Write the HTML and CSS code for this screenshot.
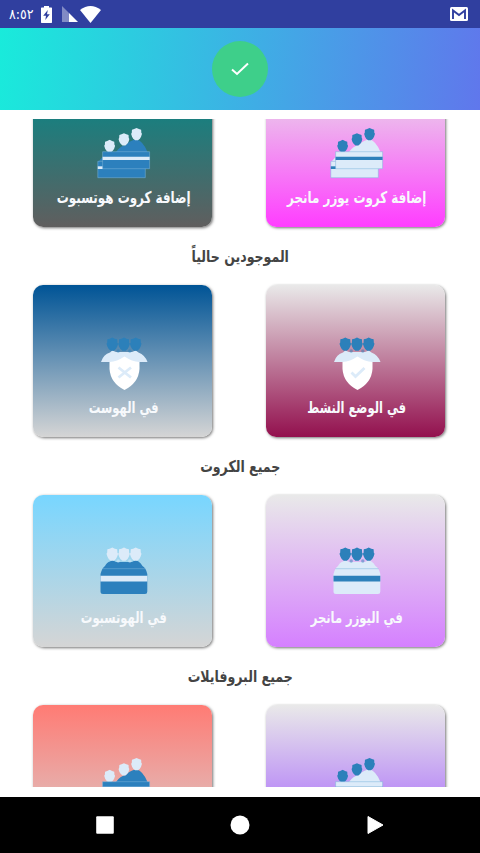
FILE: index.html
```html
<!DOCTYPE html>
<html lang="ar">
<head>
<meta charset="utf-8">
<title>الكروت</title>
<link rel="stylesheet" href="styles.css">
</head>
<body>
<svg class="defs" width="0" height="0" aria-hidden="true">
  <symbol id="head" viewBox="0 0 12 14"><path d="M6 .3L8.500 1.500L10.800 2.200L11 5.500L11.700 6.500L10.700 9.500L9.500 11.500L7.500 13.200H4.500L2.500 11.500L1.300 9.500L.3 6.500L1 5.500L1.200 2.200L3.500 1.500Z"/></symbol>
  <symbol id="stack" viewBox="0 0 64 56">
    <path class="a" d="M25 27Q29 21 35 20Q39 15 45.600 14.500Q52 16 56.500 27Z"/>
    <path class="a" d="M7.800 36.300L11.600 32V36.300Z"/>
    <g class="b"><use href="#head" x="12.900" y="14.500" width="11.500" height="13.500"/><use href="#head" x="27.200" y="7.800" width="11.500" height="13.500"/><use href="#head" x="39.800" y="2.600" width="11.500" height="13.500"/></g>
    <path class="a edge" d="M6.800 36.300H54.300V52.700H6.800Z"/>
    <path class="b" d="M6.800 41.300H12V44H6.800Z"/>
    <path class="a edge" d="M11.600 26.700H58.600V43.700H11.600Z"/>
    <path class="b" d="M11.600 31.700H58.600V35H11.600Z"/>
  </symbol>
  <symbol id="trio" viewBox="0 0 64 56">
    <use href="#head" x="15.100" y="2.100" width="12.400" height="14.400"/><use href="#head" x="26.800" y="2.100" width="12.400" height="14.400"/><use href="#head" x="38.500" y="2.100" width="12.400" height="14.400"/>
  </symbol>
  <symbol id="group" viewBox="0 0 64 56">
    <path class="a" d="M9.500 29Q11 23 14 21Q16 17 19 16.500L21.300 15L25 17H41L44.700 15L47.500 16.500Q50 18 51.500 21Q55 23 56.300 29V46.500Q56.300 49 54 49H12Q9.500 49 9.500 46.500Z"/>
    <path class="edge" d="M11.500 23.700H54.500"/>
    <path class="b" d="M9.500 30.700H56.300V36.500H9.500Z"/>
    <use class="b" href="#trio" width="64" height="56"/>
    <g class="b tint"><circle cx="27.200" cy="16" r="1.700"/><circle cx="38.800" cy="16" r="1.700"/></g>
  </symbol>
  <symbol id="shield" viewBox="0 0 64 56">
    <path class="a" d="M10 27Q12.500 19 19 17.500L21.300 15.500L25 17H41L44.700 15.500L47.500 17.500Q54 20 56.500 27Z"/>
    <use class="b" href="#trio" width="64" height="56"/>
    <g class="b tint"><circle cx="27.200" cy="16" r="1.700"/><circle cx="38.800" cy="16" r="1.700"/></g>
    <path class="plate" d="M33.500 21.500Q41 26.500 48.500 27V34Q47.500 48 33.500 55Q19.500 48 18.500 34V27Q26 26.500 33.500 21.500Z"/>
  </symbol>
</svg>

<header class="status">
  <div class="status-side">
    <span class="clock">٨:٥٢</span>
    <svg class="battery" viewBox="0 0 11 17"><path fill="#fff" d="M3 0H8V1.500H10.500L11 2V16.500L10.500 17H.5L0 16.500V2L.5 1.500H3Z"/><path fill="#303f9f" d="M6.800 4L2.200 9.800H5L4.300 14L8.800 8.200H6Z"/></svg>
    <svg class="signal" viewBox="0 0 16 16"><path fill="#fff" opacity=".4" d="M0 0L7 7V16H0Z"/><path fill="#fff" d="M7 7L16 16H7Z"/></svg>
    <svg class="wifi" viewBox="0 0 21 17"><path fill="#fff" d="M0 4Q10.500-4 21 4L10.500 17Z"/></svg>
  </div>
  <svg class="mail" viewBox="0 0 18 14"><rect width="18" height="14" rx="1.500" fill="#fff"/><path d="M3 12V3.500L9 8L15 3.500V12" fill="none" stroke="#303f9f" stroke-width="1.900"/></svg>
</header>

<div class="appbar"><div class="badge"><svg viewBox="0 0 18 14"><path d="M1 7.500L6 12L17 1.500" fill="none" stroke="#fff" stroke-width="2"/></svg></div></div>

<main class="scroller">
  <div class="content">
    <div class="row">
      <article class="card teal on-dark"><svg class="icon"><use href="#stack"/></svg><p class="label long">إضافة كروت هوتسبوت</p></article>
      <article class="card magenta"><svg class="icon"><use href="#stack"/></svg><p class="label long">إضافة كروت يوزر مانجر</p></article>
    </div>
    <h2>الموجودين حالياً</h2>
    <div class="row">
      <article class="card navy"><svg class="icon"><use href="#shield"/><path class="mark" d="M27.500 32.500L40 42.500M40 32.500L27.500 42.500"/></svg><p class="label">في الهوست</p></article>
      <article class="card crimson"><svg class="icon"><use href="#shield"/><path class="mark" d="M27.500 37.500L31.500 41.500L40.500 33"/></svg><p class="label">في الوضع النشط</p></article>
    </div>
    <h2>جميع الكروت</h2>
    <div class="row">
      <article class="card sky on-dark"><svg class="icon"><use href="#group"/></svg><p class="label">في الهوتسبوت</p></article>
      <article class="card violet"><svg class="icon"><use href="#group"/></svg><p class="label">في اليوزر مانجر</p></article>
    </div>
    <h2>جميع البروفايلات</h2>
    <div class="row">
      <article class="card coral on-dark"><svg class="icon"><use href="#stack"/></svg></article>
      <article class="card purple"><svg class="icon"><use href="#stack"/></svg></article>
    </div>
  </div>
</main>

<nav class="navbar">
  <svg viewBox="0 0 20 20"><rect x="1.200" y="1.200" width="17.600" height="17.600" rx="1" fill="#fff"/></svg>
  <svg viewBox="0 0 20 20"><circle cx="10" cy="10" r="9.500" fill="#fff"/></svg>
  <svg viewBox="0 0 20 20"><path d="M3 1.500L18 10L3 18.500Z" fill="#fff" stroke="#fff" stroke-linejoin="round"/></svg>
</nav>
</body>
</html>
```

FILE: styles.css
```css
* { box-sizing: border-box; }
body {
  margin: 0;
  width: 480px;
  height: 853px;
  overflow: hidden;
  display: flex;
  flex-direction: column;
  background: #fff;
  font-family: "DejaVu Sans", sans-serif;
}
.defs { position: absolute; }
svg { display: block; flex: none; }
.status {
  height: 28px;
  flex: none;
  background: #303f9f;
  display: flex;
  align-items: center;
  justify-content: space-between;
  padding: 0 12px 0 9px;
}
.status-side { display: flex; align-items: center; }
.clock { width: 32px; color: #fff; font-size: 14px; line-height: 28px; direction: ltr; unicode-bidi: bidi-override; transform: scaleX(.9); transform-origin: left; }
.battery { width: 11px; height: 17px; }
.signal { width: 16px; height: 16px; margin-left: 10px; }
.wifi { width: 21px; height: 17px; margin-left: 2px; }
.mail { width: 18px; height: 14px; }
.appbar {
  height: 82px;
  flex: none;
  display: flex;
  align-items: center;
  justify-content: center;
  background: linear-gradient(97deg, #19ebdb 0%, #3fade5 54%, #6077ec 100%);
}
.badge {
  width: 56px;
  height: 56px;
  border-radius: 50%;
  background: #3ecf8a;
  display: flex;
  align-items: center;
  justify-content: center;
}
.badge svg { width: 18px; height: 14px; }
.scroller { height: 668px; margin: 9px 0 10px; flex: none; overflow: hidden; padding: 0 35px 0 32.600px; }
.content { margin-top: -44px; }
.row { display: flex; justify-content: space-between; }
.card {
  width: 179.500px;
  height: 152px;
  padding-top: 50px;
  border-radius: 10px;
  box-shadow: 1px 1px 3px rgba(0, 0, 0, .55);
  --a: #dcebf9;
  --b: #2c80ba;
}
.on-dark { --a: #2c80bd; --b: #dcebf9; }
.icon { width: 64px; height: 56px; margin-left: 58px; }
.a { fill: var(--a); }
.b { fill: var(--b); }
.tint { opacity: .5; }
.edge { stroke: #7db4dc; stroke-width: .5; }
.plate { fill: #fff; }
.mark { fill: none; stroke: #dcebf9; stroke-width: 2.800; }
.label {
  margin: 3px -2px 0 0;
  text-align: center;
  direction: rtl;
  white-space: nowrap;
  font-size: 16px;
  font-weight: 700;
  line-height: 28px;
  color: #f7f9fc;
  transform: scaleX(.72);
}
.label.long { margin-left: -10px; margin-right: -12px; transform: scaleX(.745); }
h2 {
  margin: 0 -2px 0 0;
  height: 58px;
  line-height: 59px;
  text-align: center;
  direction: rtl;
  font-size: 16px;
  font-weight: 700;
  color: #444;
  transform: scaleX(.785);
}
.teal { background: linear-gradient(#008b8b, #605e5e); }
.magenta { background: linear-gradient(#e6e6e6, #ff3dff); }
.navy { background: linear-gradient(#005496, #d5d5d5); }
.crimson { background: linear-gradient(#e9e9e9, #93104e); }
.sky { background: linear-gradient(#78d6ff, #d5d5d5); }
.violet { background: linear-gradient(#e9e9e9, #d580ff); }
.coral { background: linear-gradient(#ff7b74, #d5d5d5); }
.purple { background: linear-gradient(#e9e9e9, #9c50ff); }
.navbar {
  height: 56px;
  flex: none;
  background: #000;
  display: flex;
  align-items: center;
  justify-content: center;
  gap: 115px;
}
.navbar svg { width: 20px; height: 20px; }
```
